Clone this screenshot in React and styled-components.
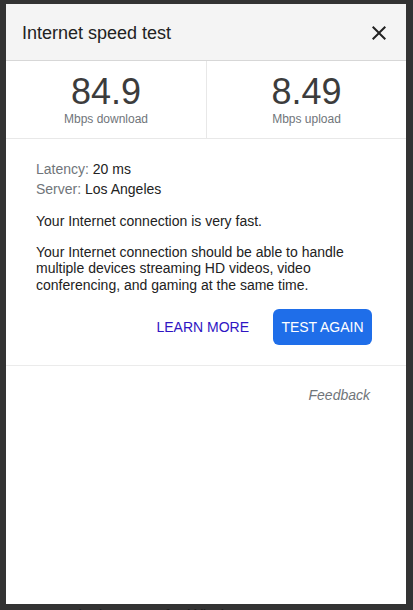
import React from 'react'
import styled, { createGlobalStyle } from 'styled-components'

const GlobalStyle = createGlobalStyle`
  html, body {
    margin: 0;
    padding: 0;
    background: #333333;
    font-family: "Liberation Sans", Arial, sans-serif;
  }
`

const Screen = styled.div`
  position: relative;
  width: 413px;
  height: 610px;
  overflow: hidden;
  background: #333333;
`

const BehindPage = styled.div`
  display: flex;
  flex-direction: column;
  justify-content: flex-end;
  height: 100%;
  padding: 0 0 0 73px;
  box-sizing: border-box;
`

const BehindText = styled.div`
  font-size: 16px;
  line-height: 20px;
  color: #1b1b1b;
  margin-bottom: -16px;
`

const Dialog = styled.div`
  position: absolute;
  top: 4px;
  left: 6px;
  width: 400px;
  height: 600px;
  background: #ffffff;
  display: flex;
  flex-direction: column;
`

const Header = styled.div`
  height: 57px;
  box-sizing: border-box;
  background: #f4f4f4;
  border-bottom: 1px solid #d7d7d7;
  display: flex;
  align-items: center;
  justify-content: space-between;
  padding: 2px 15px 0 16px;
`

const Title = styled.h1`
  margin: 0;
  font-size: 18px;
  font-weight: 400;
  color: #222222;
`

const CloseButton = styled.button`
  border: none;
  background: none;
  padding: 0;
  width: 24px;
  height: 24px;
  display: flex;
  color: #222222;
  cursor: pointer;
`

const Stats = styled.div`
  display: grid;
  grid-template-columns: 1fr 1fr;
  border-bottom: 1px solid #e8e8e8;
`

const Stat = styled.div`
  display: flex;
  flex-direction: column;
  align-items: center;
  padding: 11px 0 12px;
  & + & {
    border-left: 1px solid #e8e8e8;
  }
`

const Value = styled.div`
  font-size: 36px;
  line-height: 40px;
  color: #3c3c3c;
`

const Unit = styled.div`
  font-size: 12px;
  line-height: 14px;
  color: #70757a;
`

const Body = styled.div`
  padding: 20px 34px 20px 30px;
  border-bottom: 1px solid #ebebeb;
  font-size: 14px;
  color: #222222;
`

const InfoLine = styled.div`
  line-height: 20px;
`

const Label = styled.span`
  color: #70757a;
`

const Text = styled.p`
  margin: 14px 0 0;
  line-height: 16.7px;
`

const Actions = styled.div`
  display: flex;
  justify-content: flex-end;
  align-items: center;
  gap: 24px;
  margin-top: 15px;
`

const LinkButton = styled.a`
  font-size: 14px;
  color: #2f15c3;
  text-decoration: none;
`

const PrimaryButton = styled.button`
  width: 99px;
  height: 36px;
  border: none;
  border-radius: 6px;
  background: #1f6ee9;
  color: #ffffff;
  font-family: inherit;
  font-size: 14px;
  padding: 0;
`

const Footer = styled.div`
  display: flex;
  justify-content: flex-end;
  padding: 21px 36px 0 0;
`

const Feedback = styled.a`
  font-size: 14px;
  line-height: 16.8px;
  font-style: italic;
  color: #70757a;
`

const CloseIcon = () => (
  <svg width="24" height="24" viewBox="0 0 24 24" fill="currentColor">
    <path d="M19 6.41 17.59 5 12 10.59 6.41 5 5 6.41 10.59 12 5 17.59 6.41 19 12 13.41 17.59 19 19 17.59 13.41 12z" />
  </svg>
)

const App = () => {
  return (
    <Screen>
      <GlobalStyle />
      <BehindPage>
        <BehindText>desktop app for Windows to</BehindText>
      </BehindPage>
      <Dialog>
        <Header>
          <Title>Internet speed test</Title>
          <CloseButton aria-label="Close"><CloseIcon /></CloseButton>
        </Header>
        <Stats>
          <Stat>
            <Value>84.9</Value>
            <Unit>Mbps download</Unit>
          </Stat>
          <Stat>
            <Value>8.49</Value>
            <Unit>Mbps upload</Unit>
          </Stat>
        </Stats>
        <Body>
          <InfoLine><Label>Latency:</Label> 20 ms</InfoLine>
          <InfoLine><Label>Server:</Label> Los Angeles</InfoLine>
          <Text>Your Internet connection is very fast.</Text>
          <Text>
            Your Internet connection should be able to handle multiple devices streaming HD videos, video conferencing, and gaming at the same time.
          </Text>
          <Actions>
            <LinkButton>LEARN MORE</LinkButton>
            <PrimaryButton>TEST AGAIN</PrimaryButton>
          </Actions>
        </Body>
        <Footer>
          <Feedback>Feedback</Feedback>
        </Footer>
      </Dialog>
    </Screen>
  )
}

export default App
